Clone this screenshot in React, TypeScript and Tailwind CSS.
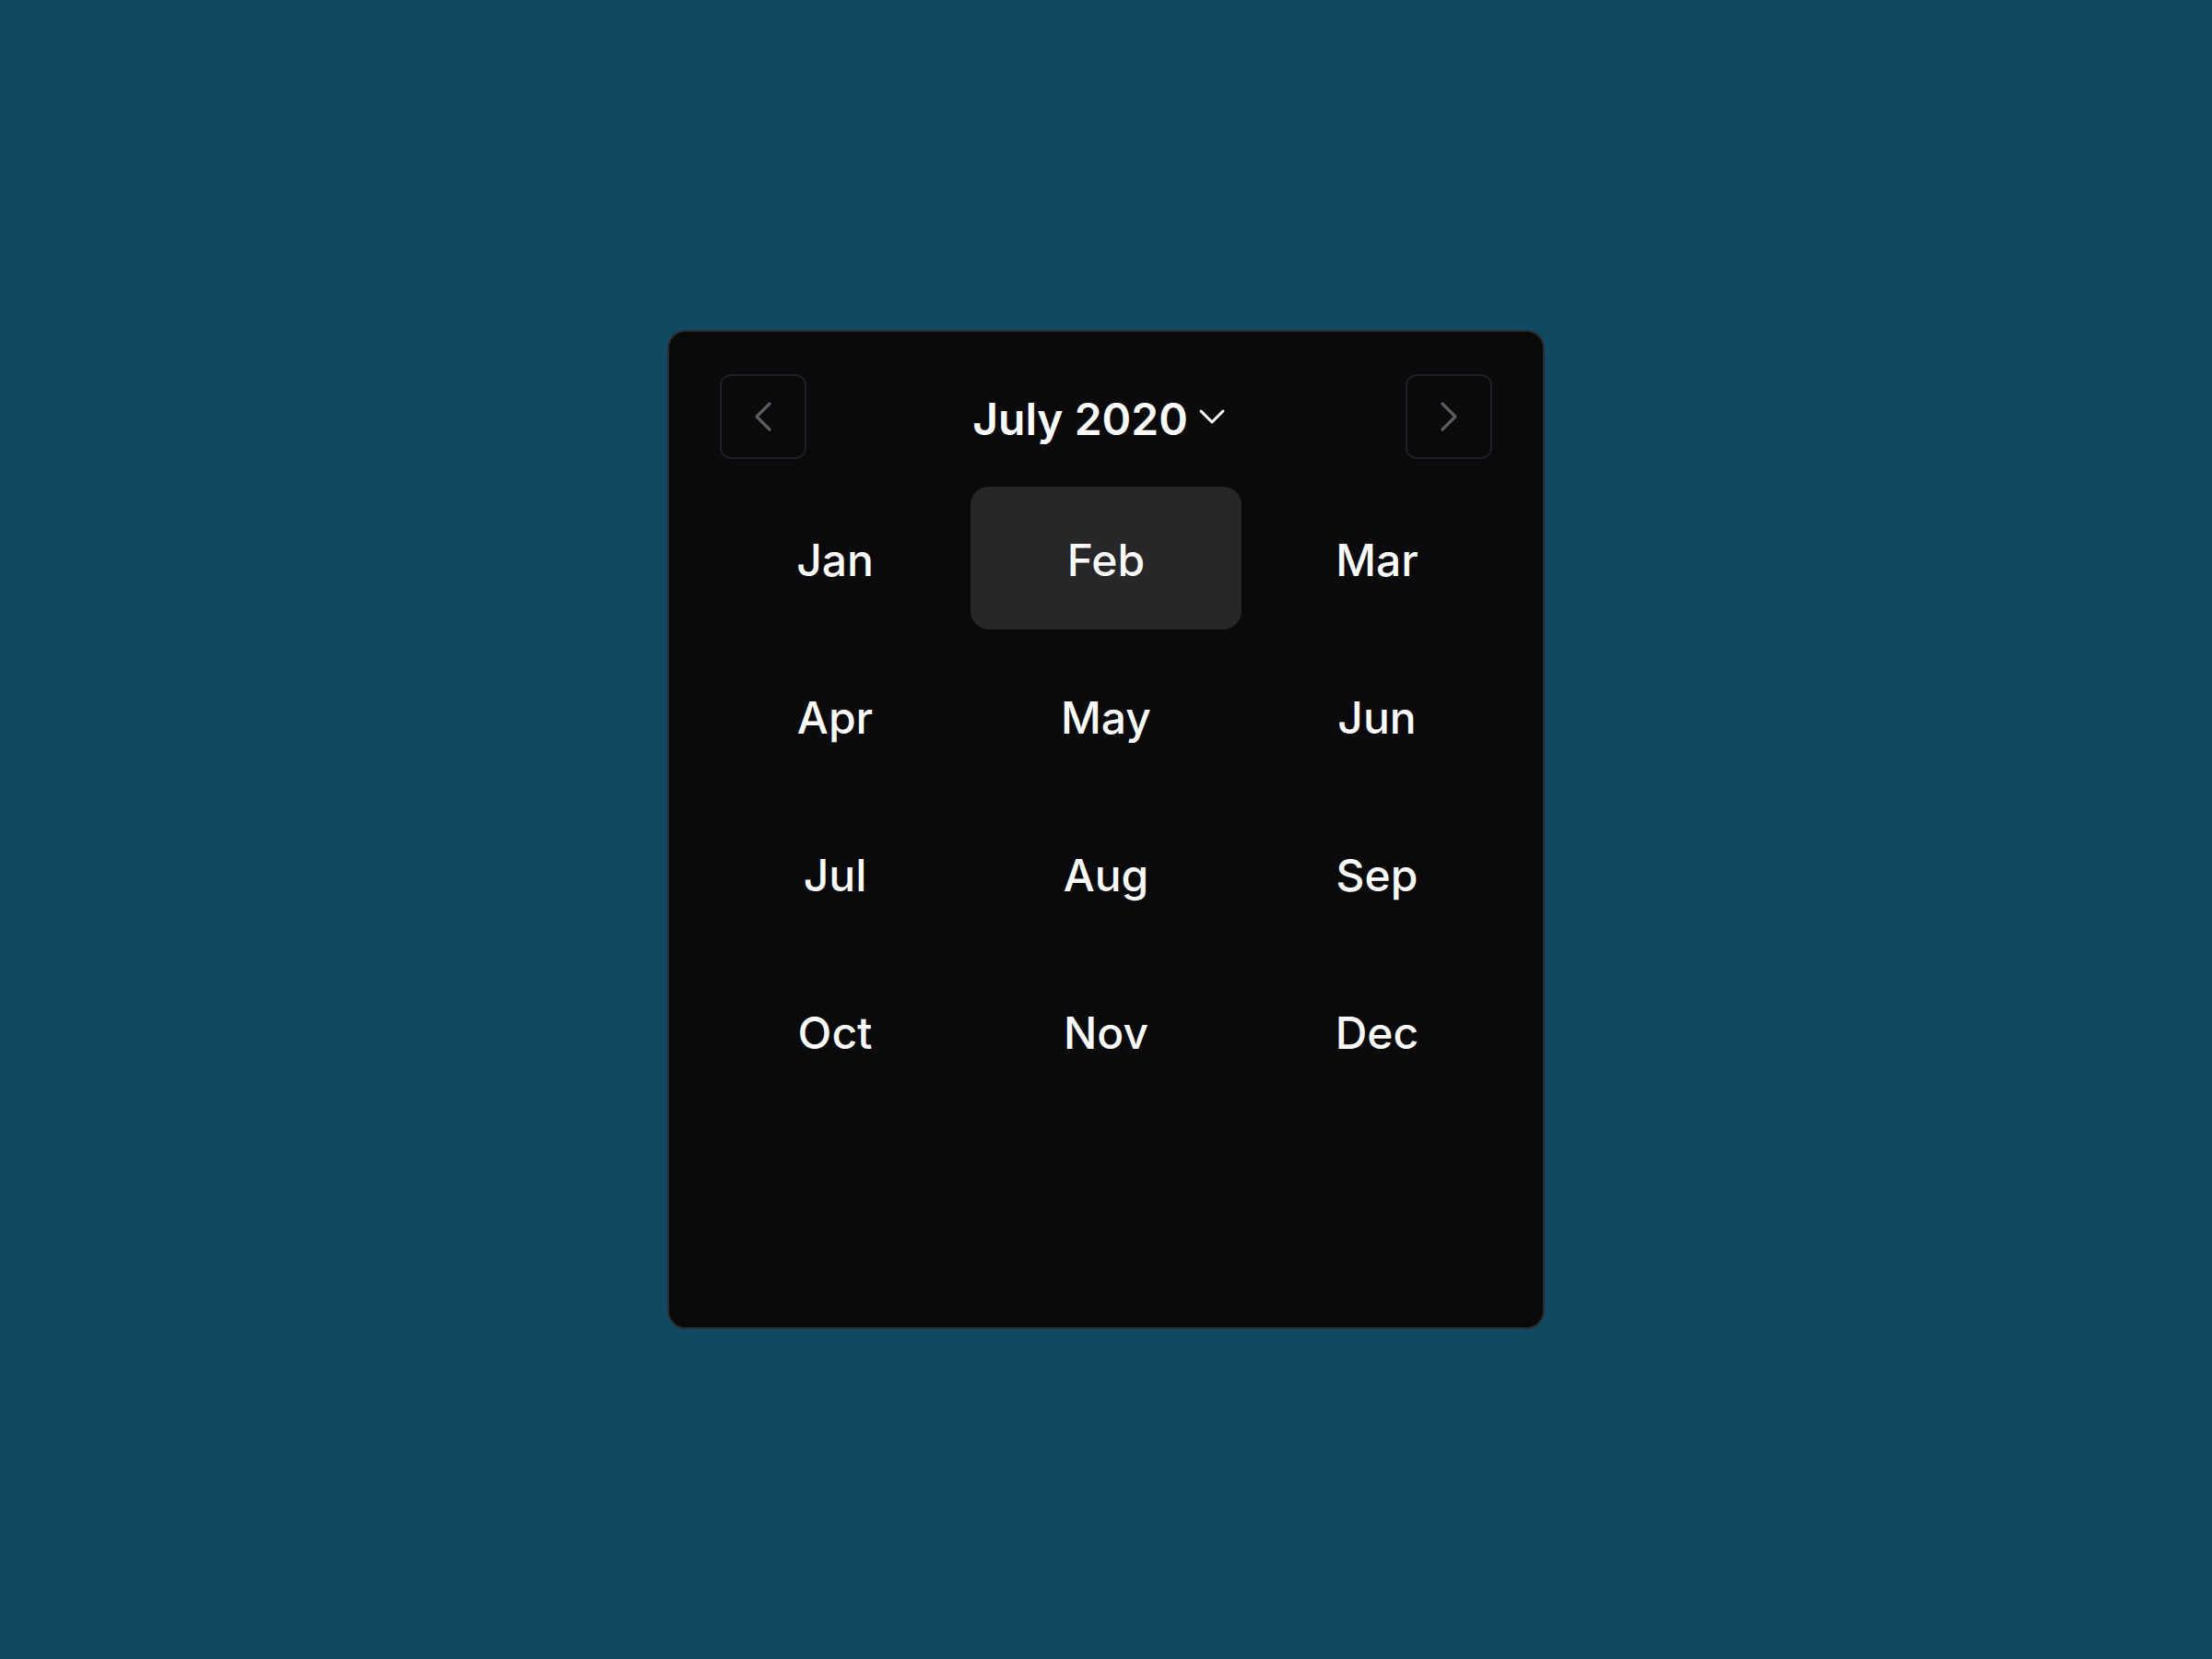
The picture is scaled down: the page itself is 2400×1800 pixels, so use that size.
import React from "react";
import { ChevronLeft, ChevronRight, ChevronDown } from "lucide-react";

const months = ["Jan", "Feb", "Mar", "Apr", "May", "Jun", "Jul", "Aug", "Sep", "Oct", "Nov", "Dec"];

export default function App() {
  return (
    <div
      className="w-full min-h-screen h-[1800px] bg-[#114963] flex items-center justify-center"
      style={{ fontFamily: "Inter, 'Noto Sans', sans-serif" }}
    >
      <div className="w-[952px] h-[1084px] bg-[#0a0a0c] border-2 border-[#2c2c30] rounded-[20px] px-[33px] pt-[46px]">
        <div className="flex items-center justify-between px-[22px] h-[92px]">
          <button className="w-[94px] h-[92px] rounded-[12px] border-2 border-[#1f1f23] flex items-center justify-center text-[#5b5b62]">
            <ChevronLeft size={56} strokeWidth={1.4} />
          </button>
          <div className="flex items-center gap-[2px] mr-[6px] text-[#fafafa]">
            <span className="text-[48px] font-semibold leading-none pt-[6px]">July 2020</span>
            <ChevronDown size={48} strokeWidth={1.5} />
          </div>
          <button className="w-[94px] h-[92px] rounded-[12px] border-2 border-[#1f1f23] flex items-center justify-center text-[#5b5b62]">
            <ChevronRight size={56} strokeWidth={1.4} />
          </button>
        </div>
        <div className="mt-[30px] grid grid-cols-3 gap-y-[16px]">
          {months.map((m) => (
            <div
              key={m}
              className={
                "h-[155px] rounded-[20px] flex items-center justify-center pt-[5px] text-[48px] font-medium text-[#fafafa] " +
                (m === "Feb" ? "bg-[#27272a]" : "")
              }
            >
              {m}
            </div>
          ))}
        </div>
      </div>
    </div>
  );
}
